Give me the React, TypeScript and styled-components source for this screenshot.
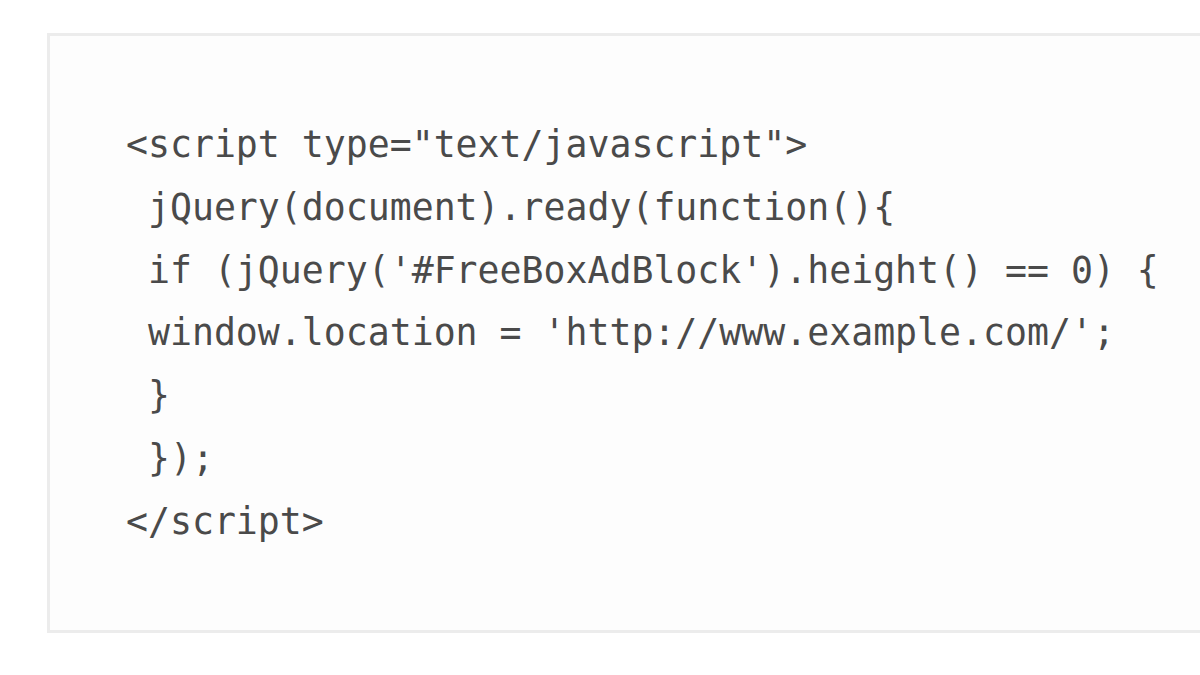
import React from "react";
import styled, { createGlobalStyle } from "styled-components";

const Global = createGlobalStyle`
  html, body { margin: 0; padding: 0; background: #ffffff; overflow: hidden; }
  body { width: 1200px; height: 675px; }
`;

const Page = styled.div`
  padding: 33px 0 0 47px;
  width: 1200px;
  height: 675px;
  box-sizing: border-box;
  overflow: hidden;
`;

const CodeBox = styled.pre`
  margin: 0;
  width: 1250px;
  height: 600px;
  box-sizing: border-box;
  border: 3px solid #ececec;
  background: #fdfdfd;
  padding: 78px 0 0 76px;
  font-family: "DejaVu Sans Mono", "Liberation Mono", monospace;
  font-size: 36.5px;
  line-height: 62.8px;
  color: #4a4a4a;
  white-space: pre;
`;

const Line = styled.div`
  height: 62.8px;
`;

const lines = [
  '<script type="text/javascript">',
  " jQuery(document).ready(function(){",
  " if (jQuery('#FreeBoxAdBlock').height() == 0) {",
  " window.location = 'http://www.example.com/';",
  " }",
  " });",
  "</script>",
];

export default function App() {
  return (
    <>
      <Global />
      <Page>
        <CodeBox>
          {lines.map((l, i) => (
            <Line key={i}>{l}</Line>
          ))}
        </CodeBox>
      </Page>
    </>
  );
}
